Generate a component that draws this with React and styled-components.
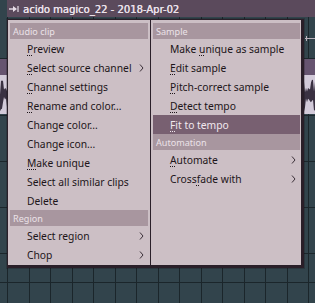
import React from "react";
import styled, { createGlobalStyle } from "styled-components";

const GlobalStyle = createGlobalStyle`
  html, body { margin: 0; padding: 0; background: #32444c; overflow: hidden; }
  #root { width: 315px; height: 303px; }
`;

const Stage = styled.div`
  position: relative;
  width: 315px;
  height: 303px;
  overflow: hidden;
  display: flex;
  flex-direction: column;
  background-color: #32444c;
  background-image: repeating-linear-gradient(
    to right,
    #1b262b 0px,
    #1b262b 1px,
    transparent 1px,
    transparent 21.5px
  );
  background-position: 7px 0;
`;

const Lane = styled.div`
  position: relative;
  flex: 0 0 ${(p) => p.$h}px;
  border-bottom: 1px solid #1b262b;
  box-sizing: border-box;
  display: flex;
  flex-direction: column;
`;

const TitleBar = styled.div`
  margin-left: 7px;
  height: 17px;
  background: #5b4a5c;
  display: flex;
  align-items: center;
  gap: 4px;
  padding-left: 2px;
  color: #ebe2eb;
  font-family: "DejaVu Sans", sans-serif;
  font-size: 10px;
  white-space: nowrap;
`;

const TitleText = styled.span`
  padding-top: 2px;
  text-shadow: 0.3px 0 0 #ebe2eb;
`;

const Marker = styled.div`
  position: absolute;
  right: 0;
  top: 38px;
  width: 10px;
  height: 1px;
  background: #b9b1bb;
  &::before {
    content: "";
    position: absolute;
    left: 1px;
    top: -2px;
    width: 1px;
    height: 5px;
    background: #b9b1bb;
  }
`;

const ClipHead = styled.div`
  height: 16px;
  background: #665470;
`;

const ClipBody = styled.div`
  height: 39px;
  background: #d2cad9;
  display: flex;
`;

const Menu = styled.div`
  position: absolute;
  left: 7px;
  top: 19px;
  display: flex;
  background: #ccbfc5;
  border: 1px solid #2a1f29;
  border-right-width: 3px;
  border-bottom-width: 3px;
  padding: 3px 1px 1px 2px;
  font-family: "Noto Sans", "Open Sans", sans-serif;
  box-shadow: 0 0 0 1px rgba(20, 14, 20, 0.25);
`;

const Column = styled.div`
  width: ${(p) => p.$w}px;
  display: flex;
  flex-direction: column;
`;

const Divider = styled.div`
  width: 1px;
  margin: -3px 2px -1px;
  background: #2a1f29;
`;

const Header = styled.div`
  height: 16px;
  display: flex;
  align-items: center;
  padding-left: 3px;
  background: #a8969f;
  color: #ebe2e8;
  font-size: 9.1px;
`;

const Item = styled.div`
  height: 19px;
  display: flex;
  align-items: center;
  justify-content: space-between;
  padding: 0 4px 0 17px;
  font-size: 10.3px;
  color: ${(p) => (p.$active ? "#f1e8ee" : "#1d1519")};
  background: ${(p) => (p.$active ? "#786071" : "transparent")};
  white-space: nowrap;
`;

const Mn = styled.span`
  text-decoration: underline dotted;
  text-underline-offset: 2px;
`;

const Chevron = () => (
  <svg width="5" height="8" viewBox="0 0 5 8">
    <path d="M1 0.5 L4 4 L1 7.5" fill="none" stroke="#3b3038" strokeWidth="1" />
  </svg>
);

const PlayIcon = () => (
  <svg width="10" height="8" viewBox="0 0 10 8">
    <path d="M0 4 H5" stroke="#e8dee8" strokeWidth="1.4" />
    <path d="M4 1 L8 4 L4 7 Z" fill="#e8dee8" />
    <path d="M9 1 V7" stroke="#e8dee8" strokeWidth="1.2" />
  </svg>
);

function wavePath() {
  const pts = [];
  const w = 315;
  for (let x = 0; x <= w; x += 1) {
    const a =
      Math.abs(Math.sin(x * 0.71) * Math.cos(x * 0.23)) * 14 +
      Math.abs(Math.sin(x * 1.7)) * 5;
    pts.push([x, 19.5 - a]);
  }
  for (let x = w; x >= 0; x -= 1) {
    const a =
      Math.abs(Math.sin(x * 0.53 + 1) * Math.cos(x * 0.31)) * 14 +
      Math.abs(Math.cos(x * 1.3)) * 5;
    pts.push([x, 19.5 + a]);
  }
  return "M" + pts.map((p) => p[0] + " " + p[1].toFixed(1)).join(" L") + " Z";
}

const Wave = () => (
  <svg width="315" height="39" viewBox="0 0 315 39">
    <path d={wavePath()} fill="#3a3142" />
  </svg>
);

const Label = ({ text, m }) => {
  if (m === undefined) return <span>{text}</span>;
  return (
    <span>
      {text.slice(0, m)}
      <Mn>{text[m]}</Mn>
      {text.slice(m + 1)}
    </span>
  );
};

const left = [
  { h: "Audio clip" },
  { t: "Preview", m: 0 },
  { t: "Select source channel", m: 0, sub: true },
  { t: "Channel settings", m: 0 },
  { t: "Rename and color...", m: 0 },
  { t: "Change color..." },
  { t: "Change icon..." },
  { t: "Make unique", m: 0 },
  { t: "Select all similar clips" },
  { t: "Delete" },
  { h: "Region" },
  { t: "Select region", sub: true },
  { t: "Chop", sub: true },
];

const right = [
  { h: "Sample" },
  { t: "Make unique as sample", m: 5 },
  { t: "Edit sample", m: 0 },
  { t: "Pitch-correct sample", m: 0 },
  { t: "Detect tempo", m: 0 },
  { t: "Fit to tempo", m: 0, active: true },
  { h: "Automation" },
  { t: "Automate", m: 0, sub: true },
  { t: "Crossfade with", m: 5, sub: true },
];

const renderEntries = (list) =>
  list.map((e, i) =>
    e.h ? (
      <Header key={i}>{e.h}</Header>
    ) : (
      <Item key={i} $active={e.active}>
        <Label text={e.t} m={e.m} />
        {e.sub && <Chevron />}
      </Item>
    )
  );

export default function App() {
  return (
    <>
      <GlobalStyle />
      <Stage>
        <Lane $h={59}>
          <TitleBar>
            <PlayIcon />
            <TitleText>acido magico_22 - 2018-Apr-02</TitleText>
          </TitleBar>
          <Marker />
        </Lane>
        <Lane $h={57}>
          <ClipHead />
          <ClipBody>
            <Wave />
          </ClipBody>
        </Lane>
        <Lane $h={46} />
        <Lane $h={46} />
        <Lane $h={46} />
        <Lane $h={29} />
        <Menu>
          <Column $w={138}>{renderEntries(left)}</Column>
          <Divider />
          <Column $w={147}>{renderEntries(right)}</Column>
        </Menu>
      </Stage>
    </>
  );
}
